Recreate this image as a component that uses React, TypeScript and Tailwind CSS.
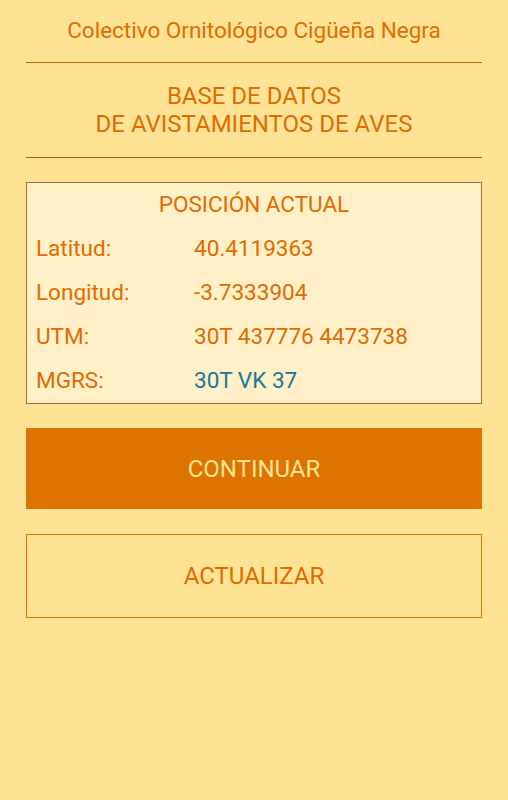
export default function App() {
  const rows = [
    { label: 'Latitud:', value: '40.4119363', blue: false },
    { label: 'Longitud:', value: '-3.7333904', blue: false },
    { label: 'UTM:', value: '30T 437776 4473738', blue: false },
    { label: 'MGRS:', value: '30T VK 37', blue: true },
  ]

  return (
    <div
      className="min-h-[800px] w-full bg-[#ffe394] px-[26px] text-[#e06c00]"
      style={{ fontFamily: 'Roboto, "Noto Sans", sans-serif' }}
    >
      <div className="flex h-[63px] items-center justify-center border-b border-[#c8620a] text-[22.5px]">
        Colectivo Ornitológico Cigüeña Negra
      </div>

      <div className="flex h-[95px] flex-col items-center justify-center border-b border-[#b8560a] text-[24px] leading-[28px]">
        <span>BASE DE DATOS</span>
        <span>DE AVISTAMIENTOS DE AVES</span>
      </div>

      <div className="mt-[24px] border border-[#ad6a34] bg-[#fff0c8]">
        <div className="flex h-[44px] items-center justify-center text-[22.5px]">
          POSICIÓN ACTUAL
        </div>
        {rows.map((row) => (
          <div
            key={row.label}
            className="flex h-[44px] items-center text-[22.5px]"
          >
            <span className="w-[167px] pl-[9px]">{row.label}</span>
            <span className={row.blue ? 'text-[#1a7896]' : ''}>
              {row.value}
            </span>
          </div>
        ))}
      </div>

      <button className="mt-[24px] flex h-[81px] w-full items-center justify-center bg-[#dd7300] text-[24px] text-[#ffe394]">
        CONTINUAR
      </button>

      <button className="mt-[25px] flex h-[84px] w-full items-center justify-center border border-[#e0700a] text-[24px] text-[#e06c00]">
        ACTUALIZAR
      </button>
    </div>
  )
}
